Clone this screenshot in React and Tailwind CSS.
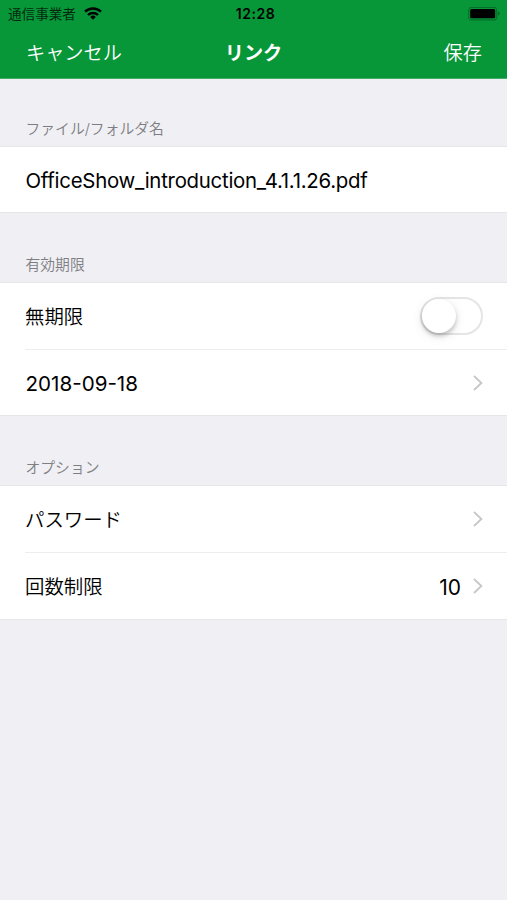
const FONT = 'font-[Inter,"Noto_Sans_CJK_JP",sans-serif]';

function Chevron() {
  return (
    <svg width="10" height="16" viewBox="0 0 10 16" fill="none" stroke="#c7c7cb" strokeWidth="1.8" className="shrink-0">
      <path d="M1 1l7.4 7L1 15" />
    </svg>
  );
}

function StatusBar() {
  return (
    <div className="grid grid-cols-3 items-center h-[27px] pl-2 pr-[7px] text-black">
      <div className="flex items-center gap-2">
        <span className="pt-[2px] text-[13.6px] leading-none text-black/75">通信事業者</span>
        <svg width="18" height="13" viewBox="0 0 18 13" fill="none" stroke="currentColor" strokeWidth="2.4">
          <path d="M1 4.700a11.500 11.500 0 0 1 16 0" />
          <path d="M4 8a7.200 7.200 0 0 1 10 0" />
          <path d="M9 12.700L6.200 9.900a4 4 0 0 1 5.600 0z" fill="currentColor" stroke="none" />
        </svg>
      </div>
      <span className="pl-[3px] text-center text-[14px] leading-none font-semibold tracking-[0.5px]">12:28</span>
      <svg width="32" height="14" viewBox="0 0 32 14" className="justify-self-end">
        <rect x="0.7" y="0.3" width="28" height="12.6" rx="3" fill="none" stroke="#000" strokeOpacity="0.25" strokeWidth="1.2" />
        <rect x="2.2" y="2" width="25" height="9.2" rx="1.5" fill="#000" />
        <path d="M30.200 4.600v4c.8-.3 1.300-1.100 1.300-2s-.5-1.700-1.300-2z" fill="#000" fillOpacity="0.4" />
      </svg>
    </div>
  );
}

function NavBar() {
  return (
    <div className="grid grid-cols-3 items-center h-[53px] px-[25px] text-[19.2px] text-white">
      <button className="pl-px text-left font-[350]">キャンセル</button>
      <h1 className="text-center font-bold">リンク</h1>
      <button className="text-right font-[350]">保存</button>
    </div>
  );
}

function Section({ title, className, children }) {
  return (
    <section>
      <h2 className={`flex items-end px-[25.5px] text-[14.8px] leading-[22px] font-[350] text-[#7d7d82] ${className}`}>{title}</h2>
      <div className="bg-white border-y border-[#e6e6e9]">{children}</div>
    </section>
  );
}

function Row({ children, className = '' }) {
  return (
    <div className="pl-[25px]">
      <div className={`flex items-center justify-between pr-6 text-black ${className}`}>{children}</div>
    </div>
  );
}

function Label({ children }) {
  return <span className="pt-[3px] text-[19.4px] font-[350]">{children}</span>;
}

function Toggle() {
  return (
    <button role="switch" aria-checked="false" className="w-[63px] h-[38px] rounded-full border-2 border-[#e5e5e6] bg-white">
      <span className="block size-[34px] rounded-full bg-white shadow-[0_3px_4px_rgba(0,0,0,0.2),0_3px_12px_rgba(0,0,0,0.1)]" />
    </button>
  );
}

export default function App() {
  return (
    <div className={`w-full h-screen overflow-hidden bg-[#efeff4] ${FONT}`} lang="ja">
      <header className="h-[79px] bg-[#079638] border-b border-[#43ad66]">
        <StatusBar />
        <NavBar />
      </header>

      <Section title="ファイル/フォルダ名" className="h-[67px] pb-[6px]">
        <Row className="h-[65px]">
          <span className="pl-[0.5px] pt-[3px] text-[20.4px] tracking-[-0.26px]">OfficeShow_introduction_4.1.1.26.pdf</span>
        </Row>
      </Section>

      <Section title="有効期限" className="h-[69px] pb-[6px]">
        <Row className="h-[67px] border-b border-[#ededef]">
          <Label>無期限</Label>
          <Toggle />
        </Row>
        <Row className="h-[65px]">
          <span className="pl-[0.5px] pt-[3px] text-[20.6px]">2018-09-18</span>
          <Chevron />
        </Row>
      </Section>

      <Section title="オプション" className="h-[69px] pb-[6px]">
        <Row className="h-[67px] border-b border-[#ededef]">
          <Label>パスワード</Label>
          <Chevron />
        </Row>
        <Row className="h-[66px]">
          <Label>回数制限</Label>
          <span className="flex items-center gap-3">
            <span className="pt-[3px] text-[21px]">10</span>
            <Chevron />
          </span>
        </Row>
      </Section>
    </div>
  );
}
